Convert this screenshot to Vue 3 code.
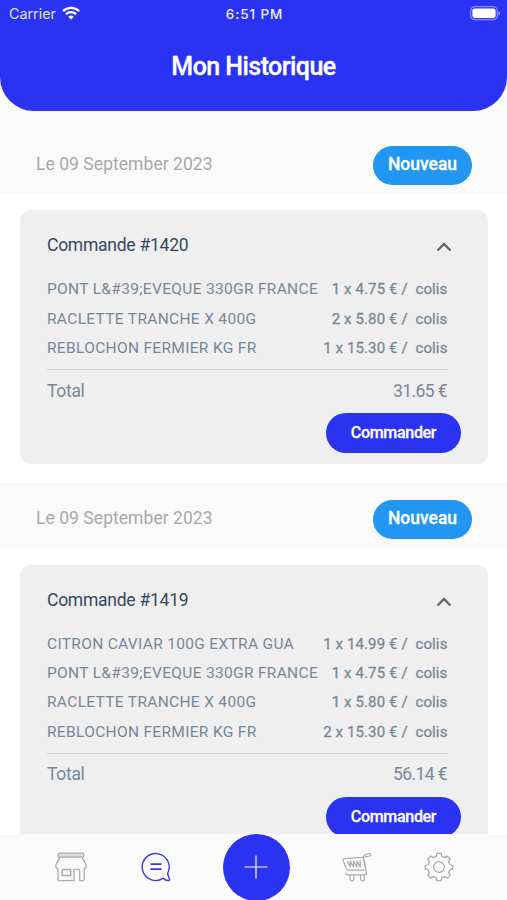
<script setup>
import { ref } from 'vue'

const orders = ref([
  {
    id: 1420,
    date: 'Le 09 September 2023',
    status: 'Nouveau',
    open: true,
    total: '31.65 €',
    items: [
      { name: 'PONT L&#39;EVEQUE 330GR FRANCE', qty: 1, price: '4.75' },
      { name: 'RACLETTE TRANCHE X 400G', qty: 2, price: '5.80' },
      { name: 'REBLOCHON FERMIER KG FR', qty: 1, price: '15.30' }
    ]
  },
  {
    id: 1419,
    date: 'Le 09 September 2023',
    status: 'Nouveau',
    open: true,
    total: '56.14 €',
    items: [
      { name: 'CITRON CAVIAR 100G EXTRA GUA', qty: 1, price: '14.99' },
      { name: 'PONT L&#39;EVEQUE 330GR FRANCE', qty: 1, price: '4.75' },
      { name: 'RACLETTE TRANCHE X 400G', qty: 1, price: '5.80' },
      { name: 'REBLOCHON FERMIER KG FR', qty: 2, price: '15.30' }
    ]
  }
])

function toggle(order) {
  order.open = !order.open
}
</script>

<template>
  <div class="screen">
    <header class="header">
      <div class="status-bar">
        <div class="carrier">
          <span>Carrier</span>
          <svg class="wifi" viewBox="0 0 18 14" fill="none" stroke="#fff" stroke-width="2.3">
            <path d="M1 5.1a11.4 11.4 0 0 1 16 0" />
            <path d="M3.9 8.3a7.3 7.3 0 0 1 10.2 0" />
            <path d="M9 13.6 6.2 10.8a4 4 0 0 1 5.6 0Z" fill="#fff" stroke="none" />
          </svg>
        </div>
        <span class="clock">6:51 PM</span>
        <div class="battery-wrap">
          <svg class="battery" viewBox="0 0 31 15">
            <rect x="0.7" y="0.7" width="26.6" height="13" rx="4" fill="none" stroke="#fff" stroke-opacity="0.45" stroke-width="1.2" />
            <rect x="2.4" y="2.4" width="23.2" height="9.6" rx="2.2" fill="#fff" />
            <path d="M28.5 5v4.6c1-.4 1.7-1.2 1.7-2.3S29.5 5.4 28.5 5Z" fill="#fff" fill-opacity="0.5" />
          </svg>
        </div>
      </div>
      <h1 class="title">Mon Historique</h1>
    </header>

    <main class="content">
      <section v-for="order in orders" :key="order.id" class="order">
        <div class="date-row">
          <span class="date">{{ order.date }}</span>
          <span class="badge">{{ order.status }}</span>
        </div>

        <div class="card-wrap">
          <div class="card">
            <div class="card-head" @click="toggle(order)">
              <span class="order-name">Commande #{{ order.id }}</span>
              <svg class="chevron" :class="{ closed: !order.open }" viewBox="0 0 16 10">
                <path d="M1.5 8.5 8 2l6.5 6.5" fill="none" stroke="#666" stroke-width="2.4" />
              </svg>
            </div>

            <template v-if="order.open">
              <ul class="items">
                <li v-for="item in order.items" :key="item.name" class="item">
                  <span class="item-name">{{ item.name }}</span>
                  <span class="item-price">{{ item.qty }} x {{ item.price }} € /&nbsp; colis</span>
                </li>
              </ul>
              <div class="total">
                <span class="total-label">Total</span>
                <span class="amount">{{ order.total }}</span>
              </div>
              <button class="order-btn">Commander</button>
            </template>
          </div>
        </div>
      </section>
    </main>

    <nav class="tab-bar">
      <button class="tab">
        <svg class="icon" viewBox="0 0 32 30" fill="none" stroke="#aaa" stroke-width="1.25" stroke-linejoin="round">
          <rect x="3.3" y="1.2" width="25.4" height="4" rx="1" fill="#ddd" />
          <path d="M4.8 5.2C3.5 9 .8 11 .8 14c0 1.5.8 2.500 2.200 2.700v10.500c0 .8.5 1.300 1.300 1.300H19V18.500c0-.7.5-1.200 1.200-1.200h3.300c.7 0 1.200.5 1.200 1.200v10H28c.7 0 1.200-.5 1.200-1.300V16.700c1.300-.2 2-1.200 2-2.700 0-3-2.700-5-4-8.800" />
          <rect x="7.2" y="17.4" width="8.5" height="6.2" rx=".8" stroke-width="1.5" />
        </svg>
      </button>
      <button class="tab chat">
        <svg class="icon" viewBox="0 0 32 30" fill="none" stroke="#3b3be0" stroke-width="1.4" stroke-linejoin="round">
          <path d="M23.3 26.2A13.5 13.5 0 1 1 27.900 20.800c-.3.8-.3 1.500.1 2.300l1.500 3.900c.3.9-.2 1.500-1.100 1.500-2.100.1-3.700-.7-5.100-2.300Z" />
          <path d="M10.5 12.1h11M10.5 17.1h11" stroke-width="1.6" />
        </svg>
      </button>
      <button class="tab add">
        <svg viewBox="0 0 24 24" stroke="#fff" stroke-width="1.2">
          <path d="M12 .5v23M.5 12h23" />
        </svg>
      </button>
      <button class="tab">
        <svg class="icon" viewBox="0 0 32 30" fill="none" stroke="#aaa" stroke-width="1.2" stroke-linejoin="round" stroke-linecap="round">
          <path d="M23.3 5.300 4.800 6.500c-1.300.1-1.900.9-1.500 2.100l3 8.300c.3.9 1 1.300 1.900 1.300h15.500" />
          <path d="M29.6 1.300 25 2.700c-.7.2-1.100.7-1.300 1.400l-.4 1.200 3 15.600c.2 1.200-.4 2-1.600 2H8.300c-1.300 0-2.200-.8-2.300-2.100M25.200 4.800l4.300-.8c.9-.2 1.300-.7 1.200-1.500-.1-.8-.6-1.200-1.400-1.100M24 7.300l2.200 12.100" />
          <path d="M7.5 9.500l2.800 5.500V9.300l3.300 5.700V9.200l3.300 5.800V9.100l3.300 5.900V9" />
          <path d="M10 23v4a1.900 1.900 0 0 0 3.800 0v-4M20.500 23v4a1.900 1.900 0 0 0 3.800 0v-4" />
        </svg>
      </button>
      <button class="tab">
        <svg class="icon" viewBox="0 0 32 30" fill="none" stroke="#aaa" stroke-width="1.3" stroke-linejoin="round">
          <path d="M14 1.400h4l.8 3.200c.9.200 1.700.6 2.500 1l3-1.400 2.800 2.700-1.500 3c.5.800.9 1.700 1.200 2.600l3 1v3.400l-3.100 1c-.2.900-.6 1.800-1.100 2.600l1.500 2.900-2.800 2.700-2.900-1.500c-.8.500-1.700.9-2.600 1.100l-.8 3h-4l-.9-3c-.9-.2-1.700-.6-2.500-1.100l-2.900 1.500-2.800-2.700 1.500-2.900c-.5-.8-.9-1.700-1.100-2.600l-3.100-1v-3.400l3.100-1c.2-.9.6-1.800 1.100-2.600l-1.500-3 2.800-2.700 3 1.400c.8-.4 1.600-.8 2.500-1Z" />
          <circle cx="16" cy="15" r="5.4" />
        </svg>
      </button>
    </nav>
  </div>
</template>

<style>
body {
  margin: 0;
  overflow: hidden;
}
</style>

<style scoped>
.screen {
  display: flex;
  flex-direction: column;
  height: 100vh;
  overflow: hidden;
  background: #fafafa;
  font-family: Roboto, 'Liberation Sans', sans-serif;
}

.header {
  flex: none;
  height: 111px;
  background: #2a33f2;
  border-radius: 0 0 34px 34px;
  color: #fff;
}

.status-bar {
  display: grid;
  grid-template-columns: 1fr auto 1fr;
  align-items: center;
  height: 28px;
  padding: 0 7px 0 9px;
  font-family: Inter, sans-serif;
}

.carrier {
  display: flex;
  align-items: center;
  gap: 6px;
  margin-top: -1px;
  color: #dfe0fd;
  font-size: 14.3px;
}

.wifi {
  width: 18px;
  height: 14px;
  margin-top: -2px;
}

.clock {
  color: #eeeffe;
  font-size: 13.5px;
  font-weight: 500;
  letter-spacing: 0.9px;
}

.battery-wrap {
  display: flex;
  justify-content: flex-end;
  margin: -2px -1px 0 0;
}

.battery {
  width: 31px;
  height: 15px;
}

.title {
  margin: 24px 0 0;
  font-size: 25px;
  font-weight: 500;
  letter-spacing: -0.55px;
  line-height: 30px;
  text-align: center;
  -webkit-text-stroke: 0.3px #fff;
}

.content {
  flex: 1;
  min-height: 0;
  padding-top: 16px;
  overflow: hidden;
}

.date-row {
  display: flex;
  align-items: center;
  justify-content: space-between;
  height: 67px;
  padding: 9px 35px 0 36px;
  box-sizing: border-box;
}

.date {
  margin-top: -2px;
  color: #a8a8a8;
  font-size: 17.5px;
  letter-spacing: 0.05px;
}

.badge {
  width: 99px;
  height: 39px;
  border-radius: 20px;
  background: #2196f3;
  color: #fff;
  font-size: 17.5px;
  font-weight: 500;
  line-height: 37px;
  text-align: center;
  -webkit-text-stroke: 0.3px #fff;
}

.card-wrap {
  padding: 16.2px 19px 17.2px 20px;
  background: #fff;
}

.card {
  display: flex;
  flex-direction: column;
  padding: 20px 40px 11px 27px;
  border-radius: 11px;
  background: #efefef;
  color: #778899;
}

.card-head {
  display: flex;
  align-items: center;
  justify-content: space-between;
  height: 30px;
}

.order-name {
  color: #34495e;
  font-size: 17.5px;
  letter-spacing: -0.25px;
}

.chevron {
  width: 16px;
  height: 10px;
  margin: 4px -4px 0 0;
}

.chevron.closed {
  transform: rotate(180deg);
}

.items {
  margin: 0;
  padding: 14.4px 0 6.4px;
  border-bottom: 1px solid #d0d3d6;
  list-style: none;
}

.item {
  display: flex;
  align-items: center;
  justify-content: space-between;
  height: 29.4px;
  white-space: nowrap;
}

.item-name {
  font-size: 15.5px;
  letter-spacing: 0.32px;
}

.item-price {
  margin-right: 0.5px;
  font-size: 15px;
  letter-spacing: 0.12px;
  -webkit-text-stroke: 0.3px #778899;
}

.total {
  display: flex;
  align-items: center;
  justify-content: space-between;
  height: 41px;
  padding-bottom: 2px;
  font-size: 17.5px;
}

.total-label {
  letter-spacing: -0.3px;
}

.amount {
  margin-right: 1px;
  letter-spacing: -0.6px;
}

.order-btn {
  align-self: flex-end;
  width: 135px;
  height: 40px;
  margin-right: -13px;
  padding: 0 0 1px;
  border: none;
  border-radius: 20px;
  background: #2a33f2;
  color: #fff;
  font-family: inherit;
  font-size: 16px;
  font-weight: 500;
  letter-spacing: -0.3px;
  -webkit-text-stroke: 0.3px #fff;
}

.tab-bar {
  display: flex;
  flex: none;
  align-items: center;
  justify-content: space-between;
  height: 66px;
  padding: 0 52px 0 55px;
  background: #fafafa;
}

.tab {
  display: flex;
  align-items: center;
  justify-content: center;
  padding: 0;
  border: none;
  background: none;
}

.icon {
  width: 32px;
  height: 30px;
}

.chat {
  padding-left: 2px;
}

.add {
  width: 67px;
  height: 67px;
  border-radius: 50%;
  background: #2a33f2;
}

.add svg {
  width: 24px;
  height: 24px;
}
</style>
